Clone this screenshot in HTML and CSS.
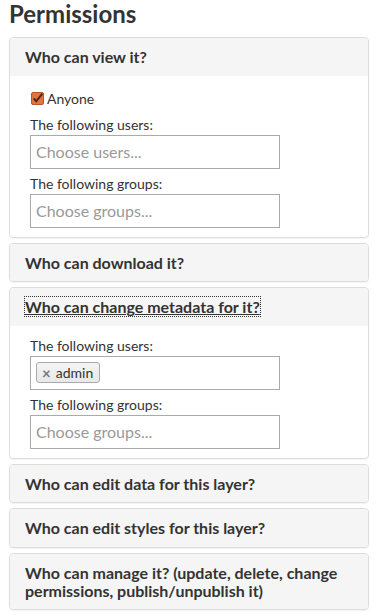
FILE: index.html
```html
<!DOCTYPE html>
<html lang="en">
<head>
    <meta charset="UTF-8">
    <title>Permissions</title>
    <link rel="stylesheet" href="styles.css">
</head>
<body>
    <h2 class="title">Permissions</h2>

    <div class="panel">
        <div class="panel-heading"><h4 class="panel-title">Who can view it?</h4></div>
        <div class="panel-body">
            <div class="checkbox">
                <svg class="check" width="13" height="13" viewBox="0 0 13 13">
                    <rect x="0.5" y="0.5" width="12" height="12" rx="1.5" fill="#e4743f" stroke="#b8552a"/>
                    <path d="M2.6 6.4 L5.2 9.2 L11.4 1.6" fill="none" stroke="#4a2a1c" stroke-width="2"/>
                </svg>
                <span>Anyone</span>
            </div>
            <label>The following users:</label>
            <div class="select-box"><span class="placeholder">Choose users...</span></div>
            <label>The following groups:</label>
            <div class="select-box last"><span class="placeholder">Choose groups...</span></div>
        </div>
    </div>

    <div class="panel">
        <div class="panel-heading"><h4 class="panel-title">Who can download it?</h4></div>
    </div>

    <div class="panel">
        <div class="panel-heading"><h4 class="panel-title"><a class="focused">Who can change metadata for it?</a></h4></div>
        <div class="panel-body">
            <label>The following users:</label>
            <div class="select-box">
                <span class="tag"><span class="tag-x">×</span>admin</span>
            </div>
            <label>The following groups:</label>
            <div class="select-box last"><span class="placeholder">Choose groups...</span></div>
        </div>
    </div>

    <div class="panel">
        <div class="panel-heading"><h4 class="panel-title">Who can edit data for this layer?</h4></div>
    </div>

    <div class="panel">
        <div class="panel-heading"><h4 class="panel-title">Who can edit styles for this layer?</h4></div>
    </div>

    <div class="panel">
        <div class="panel-heading"><h4 class="panel-title">Who can manage it? (update, delete, change permissions, publish/unpublish it)</h4></div>
    </div>
</body>
</html>
```

FILE: styles.css
```css
body {
    font-family: Lato, "Open Sans", sans-serif;
    font-size: 14px;
    color: #333;
    margin: 0;
    padding: 0 8px 0 9px;
    background-color: #ffffff;
}
.title {
    font-size: 24px;
    font-weight: bold;
    line-height: 28px;
    margin: 0 0 9px;
}
.panel {
    border: 1px solid #ddd;
    border-radius: 4px;
    margin-bottom: 5px;
    box-shadow: 0 1px 1px rgba(0,0,0,0.05);
    overflow: hidden;
}
.panel-heading {
    background-color: #f5f5f5;
    padding: 10px 15px;
}
.panel-title {
    margin: 0;
    font-size: 16px;
    font-weight: bold;
    line-height: 1.1;
}
.panel-title .focused {
    text-decoration: underline;
    outline: 1px dotted #333;
}
.panel-body {
    padding: 10px 20px 9px;
}
.checkbox {
    display: flex;
    align-items: center;
    gap: 3px;
    line-height: 20px;
    margin: 3px 0 6px 1px;
}
.check {
    display: block;
}
label {
    display: block;
    line-height: 20px;
}
.select-box {
    box-sizing: border-box;
    width: 250px;
    height: 34px;
    border: 1px solid #aaa;
    margin-bottom: 5px;
    display: flex;
    align-items: center;
    padding: 0 5px;
}
.select-box.last {
    margin-bottom: 0;
}
.placeholder {
    color: #999;
    font-size: 16px;
}
.tag {
    display: inline-flex;
    align-items: center;
    height: 19px;
    padding: 0 6px 0 5px;
    border: 1px solid #aaa;
    border-radius: 3px;
    background: linear-gradient(#f4f4f4, #e8e8e8);
    font-size: 14px;
    color: #333;
}
.tag-x {
    color: #777;
    font-weight: bold;
    font-size: 15px;
    margin-right: 5px;
}
```
